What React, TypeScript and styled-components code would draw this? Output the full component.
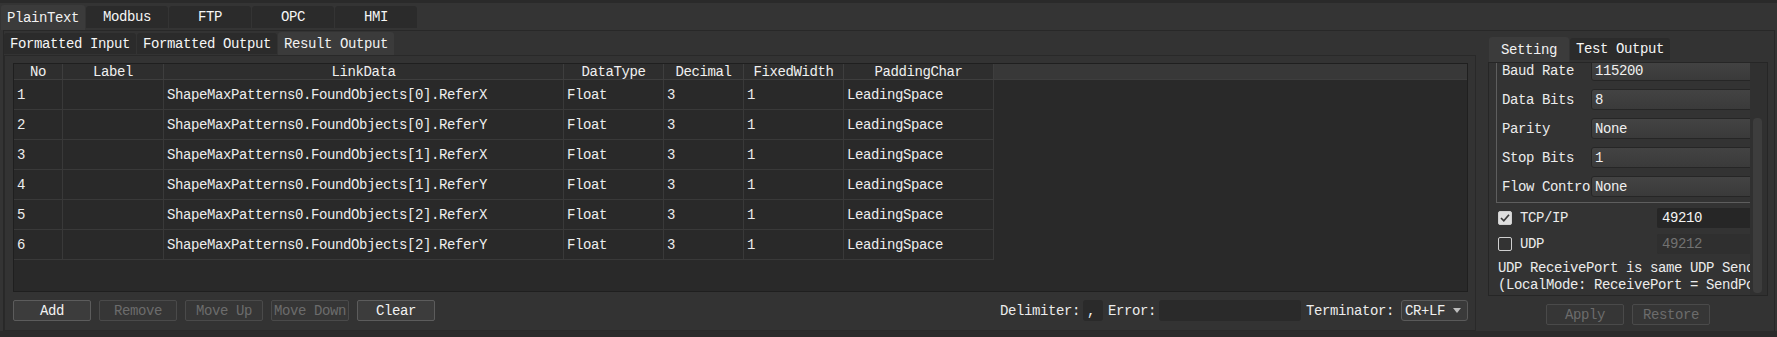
import React from "react";
import styled, { createGlobalStyle } from "styled-components";

const Global = createGlobalStyle`
  html, body { margin: 0; padding: 0; background: #343434; }
  body {
    font-family: "Liberation Mono", "DejaVu Sans Mono", monospace;
    font-size: 14px;
    letter-spacing: -0.4px;
    color: #ececec;
  }
  * { box-sizing: border-box; }
`;

const Window = styled.div`
  width: 1777px;
  height: 337px;
  display: flex;
  flex-direction: column;
  background: #343434;
  overflow: hidden;
`;

const TopStrip = styled.div`
  flex: none;
  height: 3px;
  background: #2a2a2a;
`;

const BottomStrip = styled.div`
  flex: none;
  height: 6px;
  background: #2b2b2b;
`;

const TabBar = styled.div<{ $mt: number; $h: number; $pl?: number }>`
  flex: none;
  display: flex;
  align-items: flex-end;
  gap: 1px;
  height: ${(p) => p.$h}px;
  margin-top: ${(p) => p.$mt}px;
  padding-left: ${(p) => p.$pl ?? 0}px;
`;

const Tab = styled.div<{ $active?: boolean; $min?: number; $drop: number }>`
  display: flex;
  align-items: center;
  justify-content: center;
  min-width: ${(p) => p.$min ?? 0}px;
  padding: 0 6px;
  line-height: 16px;
  height: ${(p) => (p.$active ? "100%" : `calc(100% - ${p.$drop + 1}px)`)};
  margin-bottom: ${(p) => (p.$active ? 0 : p.$drop)}px;
  background: ${(p) => (p.$active ? "#3b3b3b" : "#2b2b2b")};
  color: ${(p) => (p.$active ? "#f2f2f2" : "#f6f6f6")};
  border-radius: 3px 3px 0 0;
  white-space: nowrap;
`;

const MainPane = styled.div`
  flex: 1;
  min-height: 0;
  width: 1772px;
  margin-left: 3px;
  border: 1px solid #282828;
  border-bottom: none;
  background: #333333;
  display: flex;
`;

const LeftCol = styled.div`
  width: 1472px;
  display: flex;
  flex-direction: column;
`;

const SubPane = styled.div`
  flex: 1;
  min-height: 0;
  border: 1px solid #292929;
  background: #333333;
  display: flex;
  flex-direction: column;
  padding: 7px 7px 9px 8px;
`;

const TableFrame = styled.div`
  flex: 1;
  min-height: 0;
  border: 1px solid #1f1f1f;
  background: #292929;
  display: flex;
  flex-direction: column;
  overflow: hidden;
`;

const HeaderRow = styled.div`
  display: flex;
  height: 16px;
  flex: none;
`;

const Grid = styled.div`
  display: grid;
  grid-template-columns: 49px 101px 400px 100px 80px 100px 150px;
  width: 980px;
`;

const HeaderCell = styled.div`
  display: flex;
  align-items: center;
  justify-content: center;
  height: 16px;
  background: #2e2e2e;
  border-right: 1px solid #3e3e3e;
  border-bottom: 1px solid #3e3e3e;
  color: #f0f0f0;
  white-space: nowrap;
`;

const HeaderFill = styled.div`
  flex: 1;
  background: #383838;
  border-bottom: 1px solid #3e3e3e;
`;

const Cell = styled.div`
  display: flex;
  align-items: center;
  height: 30px;
  padding-left: 3px;
  border-right: 1px solid #393939;
  border-bottom: 1px solid #393939;
  color: #eeeeee;
  white-space: nowrap;
  overflow: hidden;
`;

const BottomRow = styled.div`
  flex: none;
  height: 21px;
  margin-top: 8px;
  display: flex;
  align-items: center;
`;

const ButtonGroup = styled.div<{ $center?: boolean }>`
  display: flex;
  gap: 8px;
  justify-content: ${(p) => (p.$center ? "center" : "flex-start")};
`;

const Button = styled.div<{ $disabled?: boolean }>`
  width: 78px;
  height: 21px;
  display: flex;
  align-items: center;
  justify-content: center;
  border-radius: 2px;
  border: 1px solid ${(p) => (p.$disabled ? "#4a4a4a" : "#5c5c5c")};
  background: ${(p) => (p.$disabled ? "#363636" : "#3c3c3c")};
  color: ${(p) => (p.$disabled ? "#6c6c6c" : "#f2f2f2")};
  white-space: nowrap;
`;

const Spacer = styled.div`
  flex: 1;
`;

const FieldLabel = styled.span<{ $ml?: number; $mr?: number }>`
  margin-left: ${(p) => p.$ml ?? 0}px;
  margin-right: ${(p) => p.$mr ?? 0}px;
  white-space: nowrap;
  color: #ececec;
`;

const DarkInput = styled.div<{ $w: number }>`
  width: ${(p) => p.$w}px;
  height: 21px;
  display: flex;
  align-items: center;
  padding-left: 4px;
  background: #2a2a2a;
  border-radius: 3px;
  color: #f0f0f0;
  flex: none;
`;

const Combo = styled.div`
  width: 67px;
  height: 21px;
  display: flex;
  align-items: center;
  justify-content: space-between;
  padding: 0 6px 0 3px;
  background: #3a3a3a;
  border: 1px solid #5a5a5a;
  border-radius: 3px;
  color: #f0f0f0;
`;

const RightCol = styled.div`
  width: 280px;
  margin-left: 12px;
  display: flex;
  flex-direction: column;
`;

const SettingPane = styled.div`
  flex: none;
  height: 234px;
  border: 1px solid #262626;
  background: #333333;
  display: flex;
`;

const Viewport = styled.div`
  flex: 1;
  min-width: 0;
  overflow: hidden;
`;

const ScrollContent = styled.div`
  margin-top: -10px;
  display: flex;
  flex-direction: column;
`;

const GroupBox = styled.div`
  width: 300px;
  margin-left: 7px;
  border: 1px solid #5e5e5e;
  padding: 6px 0 5px 5px;
  display: flex;
  flex-direction: column;
  gap: 8px;
`;

const FormRow = styled.div`
  display: flex;
  align-items: center;
  height: 21px;
`;

const FormLabel = styled.div`
  width: 89px;
  flex: none;
  white-space: nowrap;
  overflow: hidden;
  color: #ececec;
`;

const FormInput = styled.div`
  flex: 1;
  height: 21px;
  display: flex;
  align-items: center;
  padding-left: 3px;
  border: 1px solid #262626;
  border-radius: 3px;
  background: linear-gradient(#434343, #3a3a3a);
  color: #f0f0f0;
`;

const OptionRow = styled.div<{ $mt: number }>`
  display: flex;
  align-items: center;
  height: 20px;
  margin-top: ${(p) => p.$mt}px;
  padding-left: 9px;
`;

const OptionLabel = styled.div`
  width: 137px;
  margin-left: 8px;
  flex: none;
  color: #ececec;
`;

const PortInput = styled.div<{ $disabled?: boolean }>`
  width: 120px;
  height: 20px;
  flex: none;
  display: flex;
  align-items: center;
  padding-left: 5px;
  border-radius: 2px;
  background: ${(p) => (p.$disabled ? "#2f2f2f" : "#262626")};
  color: ${(p) => (p.$disabled ? "#727272" : "#f4f4f4")};
`;

const Note = styled.div`
  margin-top: 6px;
  padding-left: 9px;
  line-height: 17px;
  white-space: pre;
  color: #ececec;
`;

const ScrollBar = styled.div`
  width: 17px;
  flex: none;
  padding: 55px 5px 2px 3px;
  background: #303030;
`;

const ScrollHandle = styled.div`
  width: 9px;
  height: 175px;
  border-radius: 4px;
  background: #3d3d3d;
`;

const RightButtons = styled(ButtonGroup)`
  margin-top: 8px;
`;

function CheckBox({ checked }: { checked: boolean }) {
  return (
    <svg width="14" height="14" viewBox="0 0 14 14" style={{ flex: "none" }}>
      <rect
        x="0.5"
        y="0.5"
        width="13"
        height="13"
        rx="1.5"
        fill={checked ? "#dedede" : "#333333"}
        stroke="#d0d0d0"
      />
      {checked && (
        <path d="M3 7 L5.8 9.8 L11 3.8" fill="none" stroke="#3a3a3a" strokeWidth="1.7" />
      )}
    </svg>
  );
}

function DropArrow() {
  return (
    <svg width="8" height="5" viewBox="0 0 8 5">
      <path d="M0 0 H8 L4 5 Z" fill="#bdbdbd" />
    </svg>
  );
}

const headers = ["No", "Label", "LinkData", "DataType", "Decimal", "FixedWidth", "PaddingChar"];

const rows = [
  ["1", "", "ShapeMaxPatterns0.FoundObjects[0].ReferX", "Float", "3", "1", "LeadingSpace"],
  ["2", "", "ShapeMaxPatterns0.FoundObjects[0].ReferY", "Float", "3", "1", "LeadingSpace"],
  ["3", "", "ShapeMaxPatterns0.FoundObjects[1].ReferX", "Float", "3", "1", "LeadingSpace"],
  ["4", "", "ShapeMaxPatterns0.FoundObjects[1].ReferY", "Float", "3", "1", "LeadingSpace"],
  ["5", "", "ShapeMaxPatterns0.FoundObjects[2].ReferX", "Float", "3", "1", "LeadingSpace"],
  ["6", "", "ShapeMaxPatterns0.FoundObjects[2].ReferY", "Float", "3", "1", "LeadingSpace"],
];

const serial = [
  ["Baud Rate", "115200"],
  ["Data Bits", "8"],
  ["Parity", "None"],
  ["Stop Bits", "1"],
  ["Flow Control", "None"],
];

export default function App() {
  return (
    <>
      <Global />
      <Window>
        <TopStrip />
        <TabBar $mt={2} $h={25} $pl={1}>
          <Tab $active $min={82} $drop={2}>PlainText</Tab>
          <Tab $min={82} $drop={2}>Modbus</Tab>
          <Tab $min={82} $drop={2}>FTP</Tab>
          <Tab $min={82} $drop={2}>OPC</Tab>
          <Tab $min={82} $drop={2}>HMI</Tab>
        </TabBar>
        <MainPane>
          <LeftCol>
            <TabBar $mt={1} $h={23}>
              <Tab $drop={1}>Formatted Input</Tab>
              <Tab $drop={1}>Formatted Output</Tab>
              <Tab $active $drop={1}>Result Output</Tab>
            </TabBar>
            <SubPane>
              <TableFrame>
                <HeaderRow>
                  <Grid>
                    {headers.map((h) => (
                      <HeaderCell key={h}>{h}</HeaderCell>
                    ))}
                  </Grid>
                  <HeaderFill />
                </HeaderRow>
                <Grid>
                  {rows.map((r, i) =>
                    r.map((c, j) => <Cell key={`${i}-${j}`}>{c}</Cell>)
                  )}
                </Grid>
              </TableFrame>
              <BottomRow>
                <ButtonGroup>
                  <Button>Add</Button>
                  <Button $disabled>Remove</Button>
                  <Button $disabled>Move Up</Button>
                  <Button $disabled>Move Down</Button>
                  <Button>Clear</Button>
                </ButtonGroup>
                <Spacer />
                <FieldLabel $mr={3}>Delimiter:</FieldLabel>
                <DarkInput $w={20}>,</DarkInput>
                <FieldLabel $ml={5} $mr={3}>Error:</FieldLabel>
                <DarkInput $w={142} />
                <FieldLabel $ml={5} $mr={7}>Terminator:</FieldLabel>
                <Combo>
                  <span>CR+LF</span>
                  <DropArrow />
                </Combo>
              </BottomRow>
            </SubPane>
          </LeftCol>
          <RightCol>
            <TabBar $mt={6} $h={25} $pl={1}>
              <Tab $active $min={80} $drop={2}>Setting</Tab>
              <Tab $min={80} $drop={2}>Test Output</Tab>
            </TabBar>
            <SettingPane>
              <Viewport>
                <ScrollContent>
                  <GroupBox>
                    {serial.map(([l, v]) => (
                      <FormRow key={l}>
                        <FormLabel>{l}</FormLabel>
                        <FormInput>{v}</FormInput>
                      </FormRow>
                    ))}
                  </GroupBox>
                  <OptionRow $mt={5}>
                    <CheckBox checked />
                    <OptionLabel>TCP/IP</OptionLabel>
                    <PortInput>49210</PortInput>
                  </OptionRow>
                  <OptionRow $mt={6}>
                    <CheckBox checked={false} />
                    <OptionLabel>UDP</OptionLabel>
                    <PortInput $disabled>49212</PortInput>
                  </OptionRow>
                  <Note>
                    {"UDP ReceivePort is same UDP SendPort\n(LocalMode: ReceivePort = SendPort + 1)"}
                  </Note>
                </ScrollContent>
              </Viewport>
              <ScrollBar>
                <ScrollHandle />
              </ScrollBar>
            </SettingPane>
            <RightButtons $center>
              <Button $disabled>Apply</Button>
              <Button $disabled>Restore</Button>
            </RightButtons>
          </RightCol>
        </MainPane>
        <BottomStrip />
      </Window>
    </>
  );
}
